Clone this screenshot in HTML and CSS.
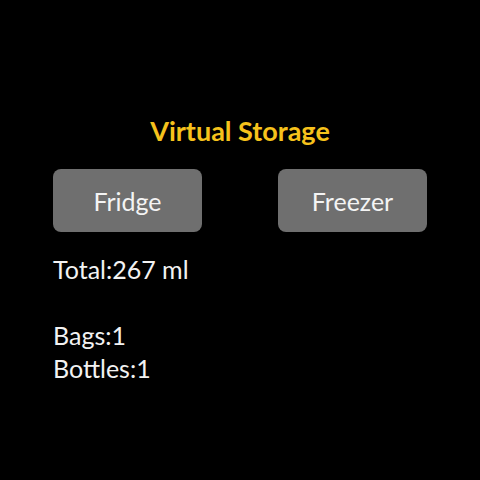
FILE: index.html
```html
<!DOCTYPE html>
<html>
<head>
<meta charset="utf-8">
<link rel="stylesheet" href="styles.css">
</head>
<body>
<div class="screen">
  <h1 class="title">Virtual Storage</h1>
  <div class="buttons">
    <button class="btn">Fridge</button>
    <button class="btn">Freezer</button>
  </div>
  <div class="info">
    <div class="line">Total:267 ml</div>
    <div class="line blank">&nbsp;</div>
    <div class="line">Bags:1</div>
    <div class="line">Bottles:1</div>
  </div>
</div>
</body>
</html>
```
FILE: styles.css
```css
html, body {
  margin: 0;
  padding: 0;
  background: #000;
}
.screen {
  width: 480px;
  height: 480px;
  box-sizing: border-box;
  padding: 114px 53px 0 53px;
  font-family: Lato, "Noto Sans", sans-serif;
  color: #f2f2f2;
}
.title {
  margin: 0;
  text-align: center;
  font-size: 27px;
  font-weight: 700;
  color: #f6c21c;
  line-height: 34px;
}
.buttons {
  display: flex;
  justify-content: space-between;
  margin-top: 21px;
}
.btn {
  width: 149px;
  height: 63px;
  border: none;
  border-radius: 8px;
  background: #6f6f6f;
  color: #f4f4f4;
  font-family: Lato, "Noto Sans", sans-serif;
  font-size: 25px;
  padding: 0;
}
.info {
  margin-top: 21px;
  font-size: 25px;
  line-height: 33px;
}
```
